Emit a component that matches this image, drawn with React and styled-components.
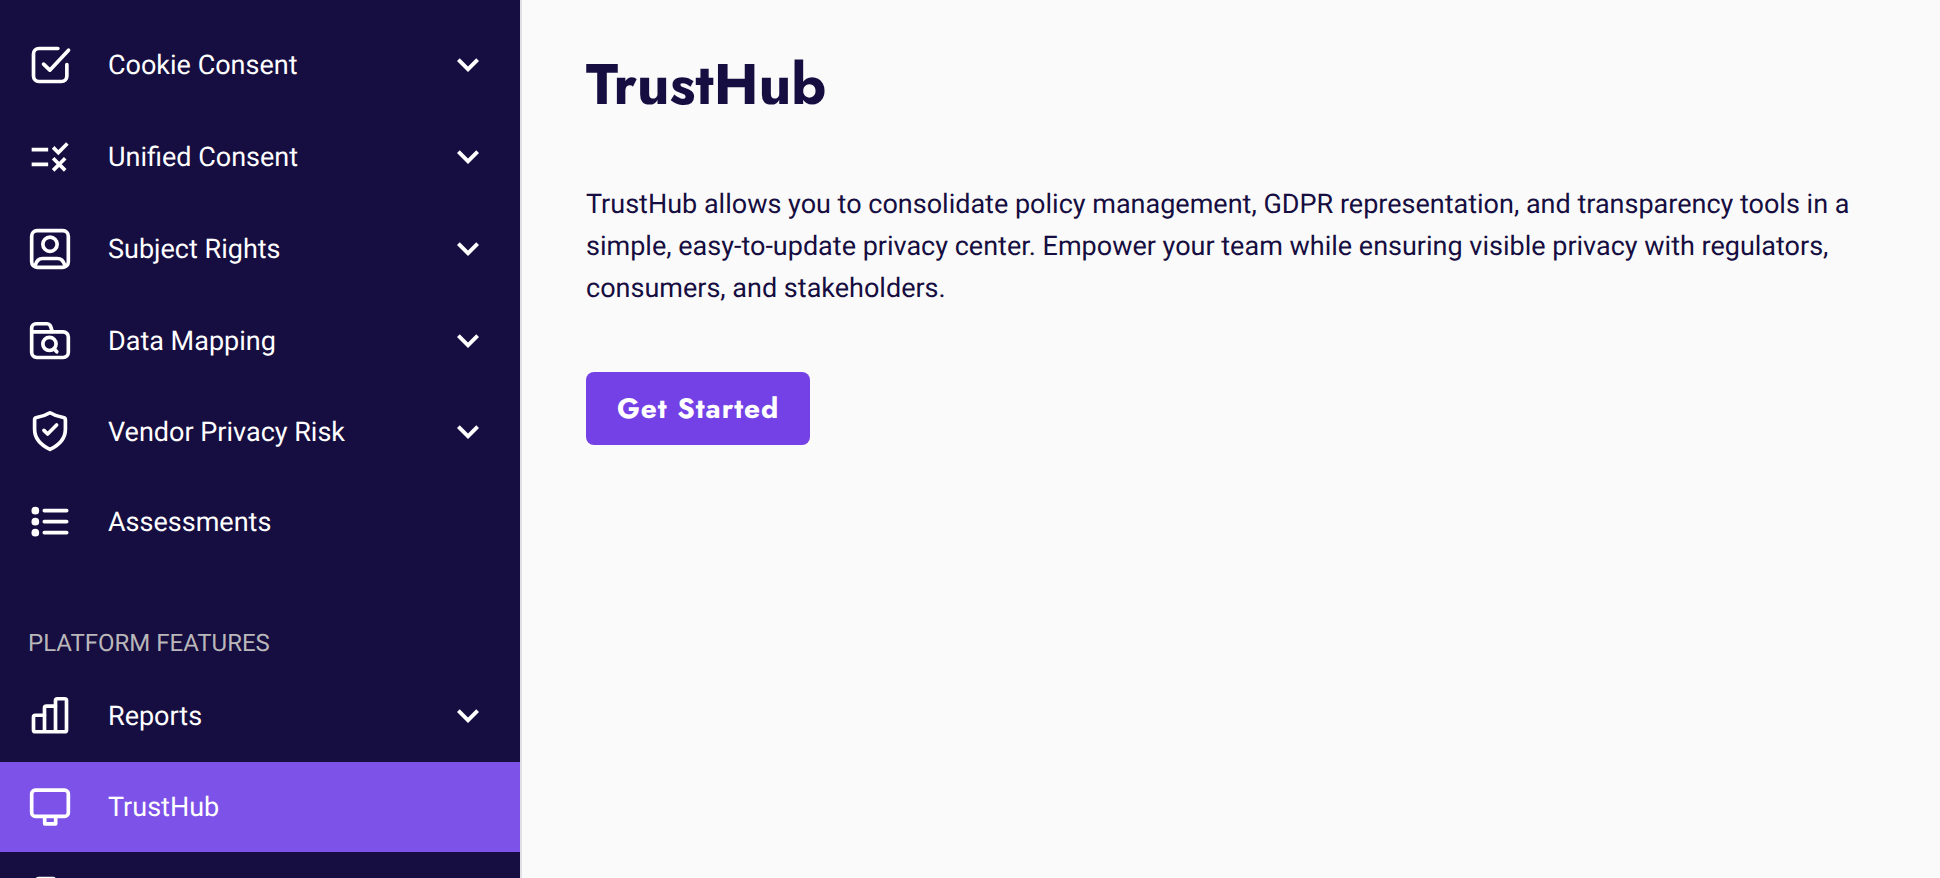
import React from 'react';
import styled, { createGlobalStyle } from 'styled-components';

const GlobalStyle = createGlobalStyle`
  * {
    box-sizing: border-box;
  }
  body {
    margin: 0;
    background-color: #fafafa;
    color: #160d40;
    font-family: Roboto, sans-serif;
    font-size: 27px;
    text-rendering: geometricPrecision;
  }
`;

const Page = styled.div`
  display: flex;
  height: 100vh;
  overflow: hidden;
`;
const Sidebar = styled.nav`
  flex: none;
  width: 522px;
  padding-top: 19px;
  overflow: hidden;
  background-color: #160d40;
  border-right: 2px solid #dfe1e7;
`;
const List = styled.ul`
  margin: 0;
  padding: 0;
  list-style: none;
`;
const Item = styled.a`
  display: flex;
  align-items: center;
  gap: 36px;
  height: ${props => props.$tall ? "92px" : "90px"};
  padding: 0 30px 0 28px;
  color: white;
  background-color: ${props => props.$active ? "#7d52e8" : "transparent"};
  line-height: 32px;
  text-decoration: none;
`;
const Label = styled.span`
  flex: 1;
`;
const SectionTitle = styled.h2`
  margin: 0;
  padding: 60px 28px 11px;
  color: #b9b7b9;
  font-size: 24px;
  font-weight: 400;
  line-height: 32px;
  text-transform: uppercase;
`;
const Icon = styled.svg`
  flex: none;
  width: 44px;
  height: 44px;
  fill: none;
  stroke: currentColor;
  stroke-width: 2;
  stroke-linecap: round;
  stroke-linejoin: round;
`;
const SolidIcon = styled(Icon)`
  fill: currentColor;
  stroke: none;
`;
const Main = styled.main`
  flex: 1;
  padding: 49px 64px;
`;
const Title = styled.h1`
  margin: 0 0 62px;
  font-family: Jost, Lato, sans-serif;
  font-size: 57px;
  font-weight: 700;
  line-height: 72px;
`;
const Text = styled.p`
  margin: 0 0 63px;
  line-height: 42px;
`;
const Button = styled.button`
  height: 73px;
  padding: 0 31px;
  background-color: #7341e6;
  border: none;
  border-radius: 8px;
  color: white;
  font-family: Jost, Lato, sans-serif;
  font-size: 28px;
  font-weight: 700;
  letter-spacing: 1px;
  text-rendering: inherit;
  cursor: pointer;
`;

const icons = {
  consent: (
    <Icon viewBox="0 0 24 24" aria-hidden="true">
      <path d="M16.3 3H6a3 3 0 0 0-3 3v12a3 3 0 0 0 3 3h12.2a3 3 0 0 0 3-3v-6.2" />
      <path d="M8.5 11.5l3.4 3.3L22.1 3.9" />
    </Icon>
  ),
  rule: (
    <SolidIcon viewBox="0 0 24 24" aria-hidden="true">
      <path d="M16.54 11 13 7.46l1.41-1.41 2.12 2.12 4.24-4.24 1.41 1.41L16.54 11zM11 7H2v2h9V7zm10 6.41L19.59 12 17 14.59 14.41 12 13 13.41 15.59 16 13 18.59 14.41 20 17 17.41 19.59 20 21 18.59 18.41 16 21 13.41zM11 15H2v2h9v-2z" />
    </SolidIcon>
  ),
  person: (
    <Icon viewBox="0 0 24 24" aria-hidden="true">
      <rect x="2" y="2" width="20" height="20" rx="3" />
      <circle cx="12" cy="9.4" r="3.9" />
      <path d="M3.9 21C4.6 18.4 6 17.2 8 17.2h8c2 0 3.4 1.2 4.1 3.8" />
    </Icon>
  ),
  folder: (
    <Icon viewBox="0 0 24 24" aria-hidden="true">
      <path d="M2 7V5a2.4 2.4 0 0 1 2.4-2.4h6c1.6 0 2 1.2 2.8 4.2" />
      <path d="M2 7h17.2A2.8 2.8 0 0 1 22 9.8v8.4a2.8 2.8 0 0 1-2.8 2.8H4.8A2.8 2.8 0 0 1 2 18.2z" />
      <circle cx="11.7" cy="13.6" r="3.6" />
      <path d="M14.2 16.2l1.5 1.7" />
    </Icon>
  ),
  shield: (
    <Icon viewBox="0 0 24 24" aria-hidden="true">
      <path d="M12 1.5c2.2 1.3 4.6 2.2 7.3 2.6.7.1 1.1.6 1.1 1.3v5.1c0 4.800-3.200 8.500-8.400 11-5.200-2.500-8.400-6.200-8.400-11V5.400c0-.7.4-1.200 1.100-1.300C7.400 3.700 9.800 2.800 12 1.500z" />
      <path d="M8.700 11.100l2 2 4.900-4.900" />
    </Icon>
  ),
  list: (
    <Icon viewBox="0 0 24 24" aria-hidden="true">
      <path d="M8.9 5.8H21.1M8.9 11.8H21.1M8.9 17.8H21.1" />
      <g fill="currentColor" stroke="none">
        <circle cx="4" cy="5.8" r="2.1" />
        <circle cx="4" cy="11.8" r="2.1" />
        <circle cx="4" cy="17.8" r="2.1" />
      </g>
    </Icon>
  ),
  chart: (
    <Icon viewBox="0 0 24 24" aria-hidden="true">
      <path d="M9 20.600V11.600H4a1 1 0 0 0-1 1v7a1 1 0 0 0 1 1h16a1 1 0 0 0 1-1V3.600a1 1 0 0 0-1-1h-4a1 1 0 0 0-1 1v17" />
      <path d="M9 11.600V7.600a1 1 0 0 1 1-1h5" />
    </Icon>
  ),
  monitor: (
    <Icon viewBox="0 0 24 24" aria-hidden="true">
      <rect x="2" y="2.8" width="20" height="14.3" rx="2" />
      <path d="M9.1 17.5v3.7h6v-3.7" />
    </Icon>
  ),
  document: (
    <Icon viewBox="0 0 24 24" aria-hidden="true">
      <path d="M14 2H6a2 2 0 0 0-2 2v16a2 2 0 0 0 2 2h12a2 2 0 0 0 2-2V8z" />
    </Icon>
  ),
};

const products = [
  { name: "Cookie Consent", icon: "consent", parent: true, tall: true },
  { name: "Unified Consent", icon: "rule", parent: true, tall: true },
  { name: "Subject Rights", icon: "person", parent: true, tall: true },
  { name: "Data Mapping", icon: "folder", parent: true, tall: true },
  { name: "Vendor Privacy Risk", icon: "shield", parent: true },
  { name: "Assessments", icon: "list" },
];

const features = [
  { name: "Reports", icon: "chart", parent: true, tall: true },
  { name: "TrustHub", icon: "monitor", active: true },
  { name: "Documents", icon: "document", iconOnly: true },
];

const Menu = ({ items }) => (
  <List>
    {items.map(item => (
      <li key={item.name}>
        <Item
          href="#"
          $tall={item.tall}
          $active={item.active}
          aria-label={item.iconOnly ? item.name : undefined}
          aria-current={item.active ? "page" : undefined}
        >
          {icons[item.icon]}
          {!item.iconOnly && <Label>{item.name}</Label>}
          {item.parent && (
            <SolidIcon viewBox="0 0 24 24" aria-hidden="true">
              <path d="M16.5 8.3 12 12.8 7.5 8.3 6 9.8l6 6 6-6z" />
            </SolidIcon>
          )}
        </Item>
      </li>
    ))}
  </List>
);

const App = () => {
  return (
    <Page>
      <GlobalStyle />
      <Sidebar>
        <Menu items={products} />
        <SectionTitle>Platform Features</SectionTitle>
        <Menu items={features} />
      </Sidebar>
      <Main>
        <Title>TrustHub</Title>
        <Text>
          TrustHub allows you to consolidate policy management, GDPR representation, and
          transparency tools in a simple, easy-to-update privacy center. Empower your team
          while ensuring visible privacy with regulators, consumers, and stakeholders.
        </Text>
        <Button type="button">Get Started</Button>
      </Main>
    </Page>
  )
}

export default App
